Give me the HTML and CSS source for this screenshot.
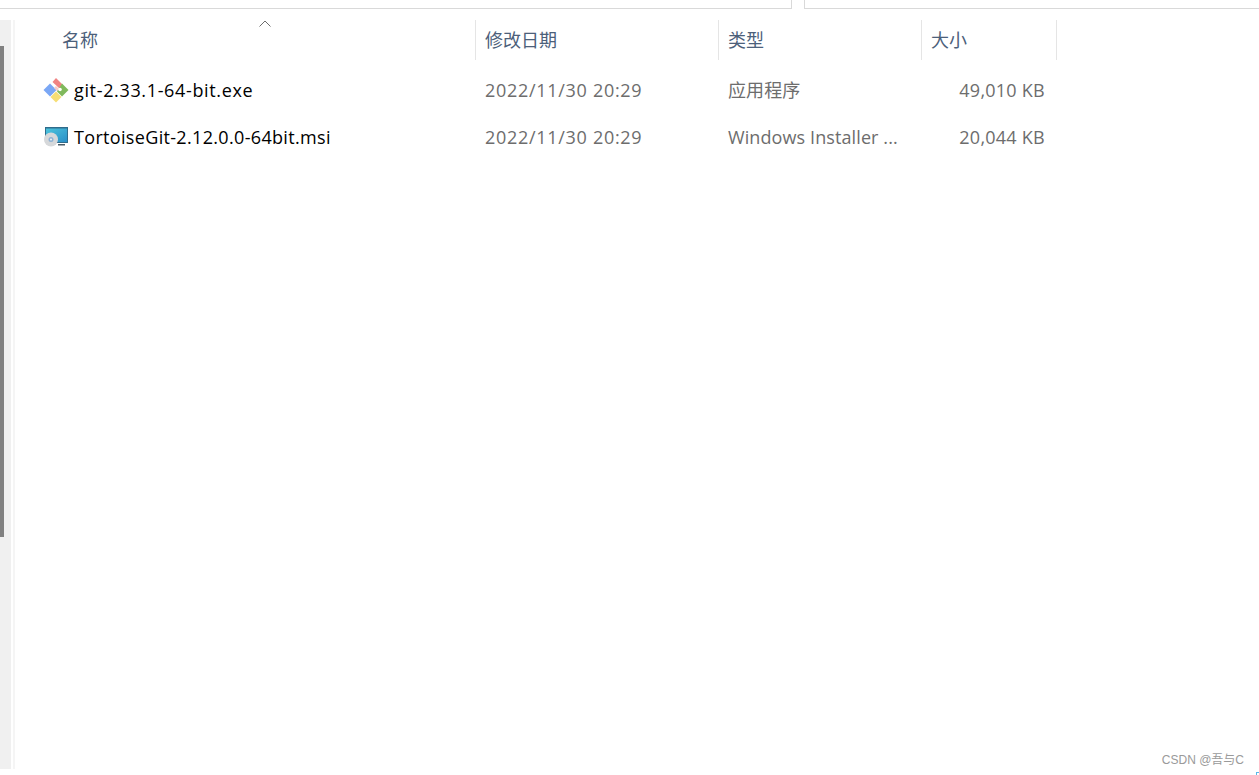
FILE: index.html
```html
<!DOCTYPE html>
<html>
<head>
  <meta charset="utf-8">
  <link rel="stylesheet" href="styles.css">
</head>
<body>
  <div class="top-bar">
    <div class="top-left"></div>
    <div class="top-right"></div>
  </div>

  <div class="main">
    <div class="side-strip">
      <div class="scroll-thumb"></div>
    </div>

    <div class="file-pane">
      <div class="sort-arrow">
        <svg width="12" height="7" viewBox="0 0 12 7"><path d="M0.5 6.5 L6 1 L11.5 6.5" fill="none" stroke="#6d6d6d" stroke-width="1"/></svg>
      </div>

      <div class="col-row head-row">
        <div class="col col-name">名称</div>
        <div class="col col-date">修改日期</div>
        <div class="col col-type">类型</div>
        <div class="col col-size">大小</div>
      </div>

      <div class="col-row file-row">
        <div class="col col-name">
          <svg class="file-icon" width="26" height="26" viewBox="0 0 26 26">
            <path d="M0.5 13 L7 6.5 L13.5 13 L7 19.5 Z" fill="#7aa7f5"/>
            <path d="M9.5 5 L13 1 L20 8 L16.5 11.5 Z" fill="#f08383"/>
            <path d="M13 9 L16 12 L14.5 14.5 L11 11 Z" fill="#f6c9c9"/>
            <path d="M19 6.5 L25.5 13 L19 19.5 L14 14.5 Z" fill="#80b95c"/>
            <circle cx="17" cy="12.5" r="1.8" fill="#fff"/>
            <path d="M13 14.5 L18.5 20 L13 25.5 L7.5 20 Z" fill="#f6de75"/>
          </svg>
          <span class="file-name name-git">git-2.33.1-64-bit.exe</span>
        </div>
        <div class="col col-date">2022/11/30 20:29</div>
        <div class="col col-type">应用程序</div>
        <div class="col col-size">49,010 KB</div>
      </div>

      <div class="col-row file-row">
        <div class="col col-name">
          <svg class="file-icon" width="26" height="26" viewBox="0 0 26 26">
            <defs>
              <linearGradient id="screen" x1="0" y1="0" x2="1" y2="1">
                <stop offset="0" stop-color="#4cc4dc"/>
                <stop offset="1" stop-color="#2a8fc8"/>
              </linearGradient>
            </defs>
            <rect x="2" y="3" width="23" height="16" fill="#2f6c8c"/>
            <rect x="3" y="4.5" width="21" height="13.5" fill="url(#screen)"/>
            <rect x="15" y="20" width="7" height="1.5" fill="#4a5d68"/>
            <circle cx="8" cy="15.5" r="7" fill="#d6d8da"/>
            <circle cx="8" cy="15.5" r="2.5" fill="#8fb2d4"/>
            <circle cx="8" cy="15.5" r="1" fill="#f2f4f6"/>
          </svg>
          <span class="file-name name-tortoise">TortoiseGit-2.12.0.0-64bit.msi</span>
        </div>
        <div class="col col-date">2022/11/30 20:29</div>
        <div class="col col-type">Windows Installer ...</div>
        <div class="col col-size">20,044 KB</div>
      </div>
    </div>
  </div>

  <div class="watermark">CSDN @吾与C</div>
  <div class="corner-mark"></div>
</body>
</html>
```

FILE: styles.css
```css
html, body {
  height: 100%;
}

body {
  margin: 0;
  background: white;
  font-family: "Open Sans", "Noto Sans CJK SC", sans-serif;
  overflow: hidden;
  position: relative;
}

.top-bar {
  display: flex;
  justify-content: space-between;
  height: 9px;
}

.top-left {
  width: 792px;
  border-right: 1px solid #d9d9d9;
  border-bottom: 1px solid #d9d9d9;
  box-sizing: border-box;
}

.top-right {
  width: 455px;
  border-left: 1px solid #d9d9d9;
  border-bottom: 1px solid #d9d9d9;
  box-sizing: border-box;
}

.main {
  display: flex;
  height: 749px;
  margin-top: 11px;
}

.side-strip {
  width: 11px;
  background: #f0f0f0;
  padding-top: 26px;
  box-sizing: border-box;
}

.scroll-thumb {
  width: 4px;
  height: 491px;
  background: #808080;
}

.file-pane {
  flex: 1;
  margin-left: 2px;
  border-left: 2px solid #f5f5f5;
  position: relative;
}

.sort-arrow {
  position: absolute;
  left: 244px;
  top: 0;
  line-height: 0;
}

.col-row {
  display: flex;
  font-size: 18px;
}

.head-row {
  height: 40px;
  color: #4c607a;
  margin-bottom: 6px;
}

.head-row .col {
  border-right: 1px solid #e5e5e5;
  display: flex;
  align-items: center;
  padding-bottom: 2px;
}

.file-row {
  height: 47px;
  align-items: center;
  color: #6d6d6d;
}

.col {
  box-sizing: border-box;
  padding-left: 9px;
  white-space: nowrap;
}

.col-name {
  width: 461px;
  padding-left: 47px;
}

.col-date {
  width: 243px;
}

.col-type {
  width: 203px;
}

.col-size {
  width: 135px;
}

.file-row .col-date {
  letter-spacing: 0.7px;
}

.file-row .col-type {
  letter-spacing: 0.1px;
  line-height: 22px;
}

.file-row .col-name {
  padding-left: 28px;
  display: flex;
  align-items: center;
  gap: 5px;
}

.file-row .col-size {
  text-align: right;
  padding-right: 12px;
  letter-spacing: 0.25px;
}

.file-icon {
  flex: none;
}

.file-name {
  color: #000;
}

.name-git {
  letter-spacing: 0.65px;
}

.name-tortoise {
  letter-spacing: 0.33px;
}

.watermark {
  position: absolute;
  right: 15px;
  bottom: 8px;
  font-family: "Liberation Sans", "Noto Sans CJK SC", sans-serif;
  font-size: 12px;
  color: #9a9a9a;
}

.corner-mark {
  position: absolute;
  right: 0;
  bottom: 0;
  width: 2px;
  height: 2px;
  border-left: 1px solid #5bb8e8;
  border-top: 1px solid #5bb8e8;
}
```
